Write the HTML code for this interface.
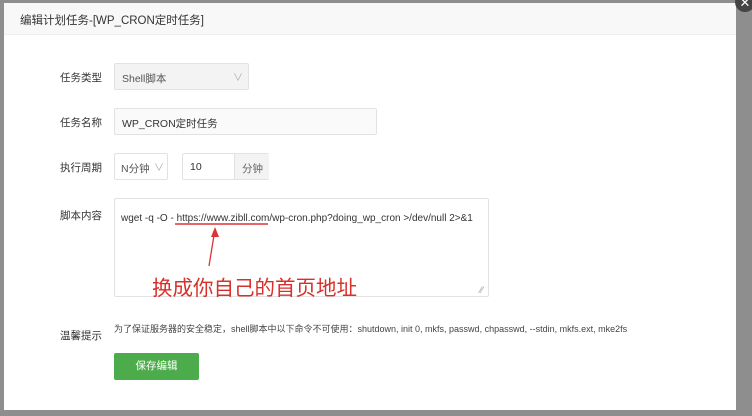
<!DOCTYPE html>
<html><head><meta charset="utf-8"><style>
body{margin:0;width:752px;height:416px;background:#8e8e8e;position:relative;overflow:hidden;font-family:"Liberation Sans","Noto Sans CJK SC",sans-serif;font-size:11px;color:#333}
.dlg{position:absolute;left:4px;top:3px;width:732px;height:407px;background:#fff}
.hd{position:absolute;left:0;top:0;width:732px;height:31px;background:#f8f8f8;border-bottom:1px solid #eee}
.hd span{position:absolute;left:16px;top:9px;font-size:11.5px;color:#333}
.a{position:absolute}
.lab{position:absolute;left:56px;font-size:10.5px;color:#333}
.box{position:absolute;border:1px solid #e2e2e2;border-radius:2px;background:#fff;box-sizing:border-box}
.close{position:absolute;left:735px;top:-8px;width:20px;height:20px;border-radius:50%;background:#444;color:#fff;font-size:13px;text-align:center;line-height:22px}
</style></head><body>
<div class="dlg">
<div class="hd"><span>编辑计划任务-[WP_CRON定时任务]</span></div>
<div class="lab" style="top:67px">任务类型</div>
<div class="box" style="left:110px;top:60px;width:135px;height:27px;background:#f3f3f3"><span class="a" style="left:7px;top:7px;color:#555;font-size:10.5px">Shell脚本</span><span class="a" style="left:118px;top:5px;color:#aaa;font-size:10px">∨</span></div>
<div class="lab" style="top:112px">任务名称</div>
<div class="box" style="left:110px;top:105px;width:263px;height:27px;background:#fafafa"><span class="a" style="left:7px;top:7px;font-size:10.5px">WP_CRON定时任务</span></div>
<div class="lab" style="top:157px">执行周期</div>
<div class="box" style="left:110px;top:150px;width:54px;height:27px"><span class="a" style="left:6px;top:7px;color:#555;font-size:10.5px">N分钟</span><span class="a" style="left:39px;top:5px;color:#aaa;font-size:10px">∨</span></div>
<div class="box" style="left:178px;top:150px;width:87px;height:27px"><span class="a" style="left:7px;top:7px;font-size:10.5px">10</span><div class="a" style="left:51px;top:0;width:34px;height:25px;background:#f3f3f3;border-left:1px solid #e2e2e2"><span class="a" style="left:7px;top:7px;color:#666;font-size:10.5px">分钟</span></div></div>
<div class="lab" style="top:205px">脚本内容</div>
<div class="box" style="left:110px;top:195px;width:375px;height:99px"><span class="a" style="left:6px;top:14px;font-size:10px;white-space:nowrap">wget -q -O - https://www.zibll.com/wp-cron.php?doing_wp_cron &gt;/dev/null 2&gt;&amp;1</span>
<span class="a" style="left:365px;top:86px;color:#999;font-size:9px">⁄⁄</span></div>
<svg class="a" style="left:0;top:0" width="732" height="407"><line x1="171" y1="221" x2="264" y2="221" stroke="#d33" stroke-width="1.5"/><line x1="211" y1="226" x2="205" y2="263" stroke="#d33" stroke-width="1.3"/><polygon points="211,224 207,234 215,234" fill="#d33"/></svg>
<div class="a" style="left:148px;top:268px;font-size:20.5px;color:#d8302a">换成你自己的首页地址</div>
<div class="lab" style="top:325px">温馨提示</div>
<div class="a" style="left:110px;top:319px;font-size:9px;color:#444;white-space:nowrap">为了保证服务器的安全稳定，shell脚本中以下命令不可使用：shutdown, init 0, mkfs, passwd, chpasswd, --stdin, mkfs.ext, mke2fs</div>
<div class="a" style="left:110px;top:350px;width:85px;height:27px;background:#4cac4c;border-radius:2px;color:#fff;text-align:center;line-height:27px;font-size:10.5px">保存编辑</div>
</div>
<div class="close">✕</div>
</body></html>
